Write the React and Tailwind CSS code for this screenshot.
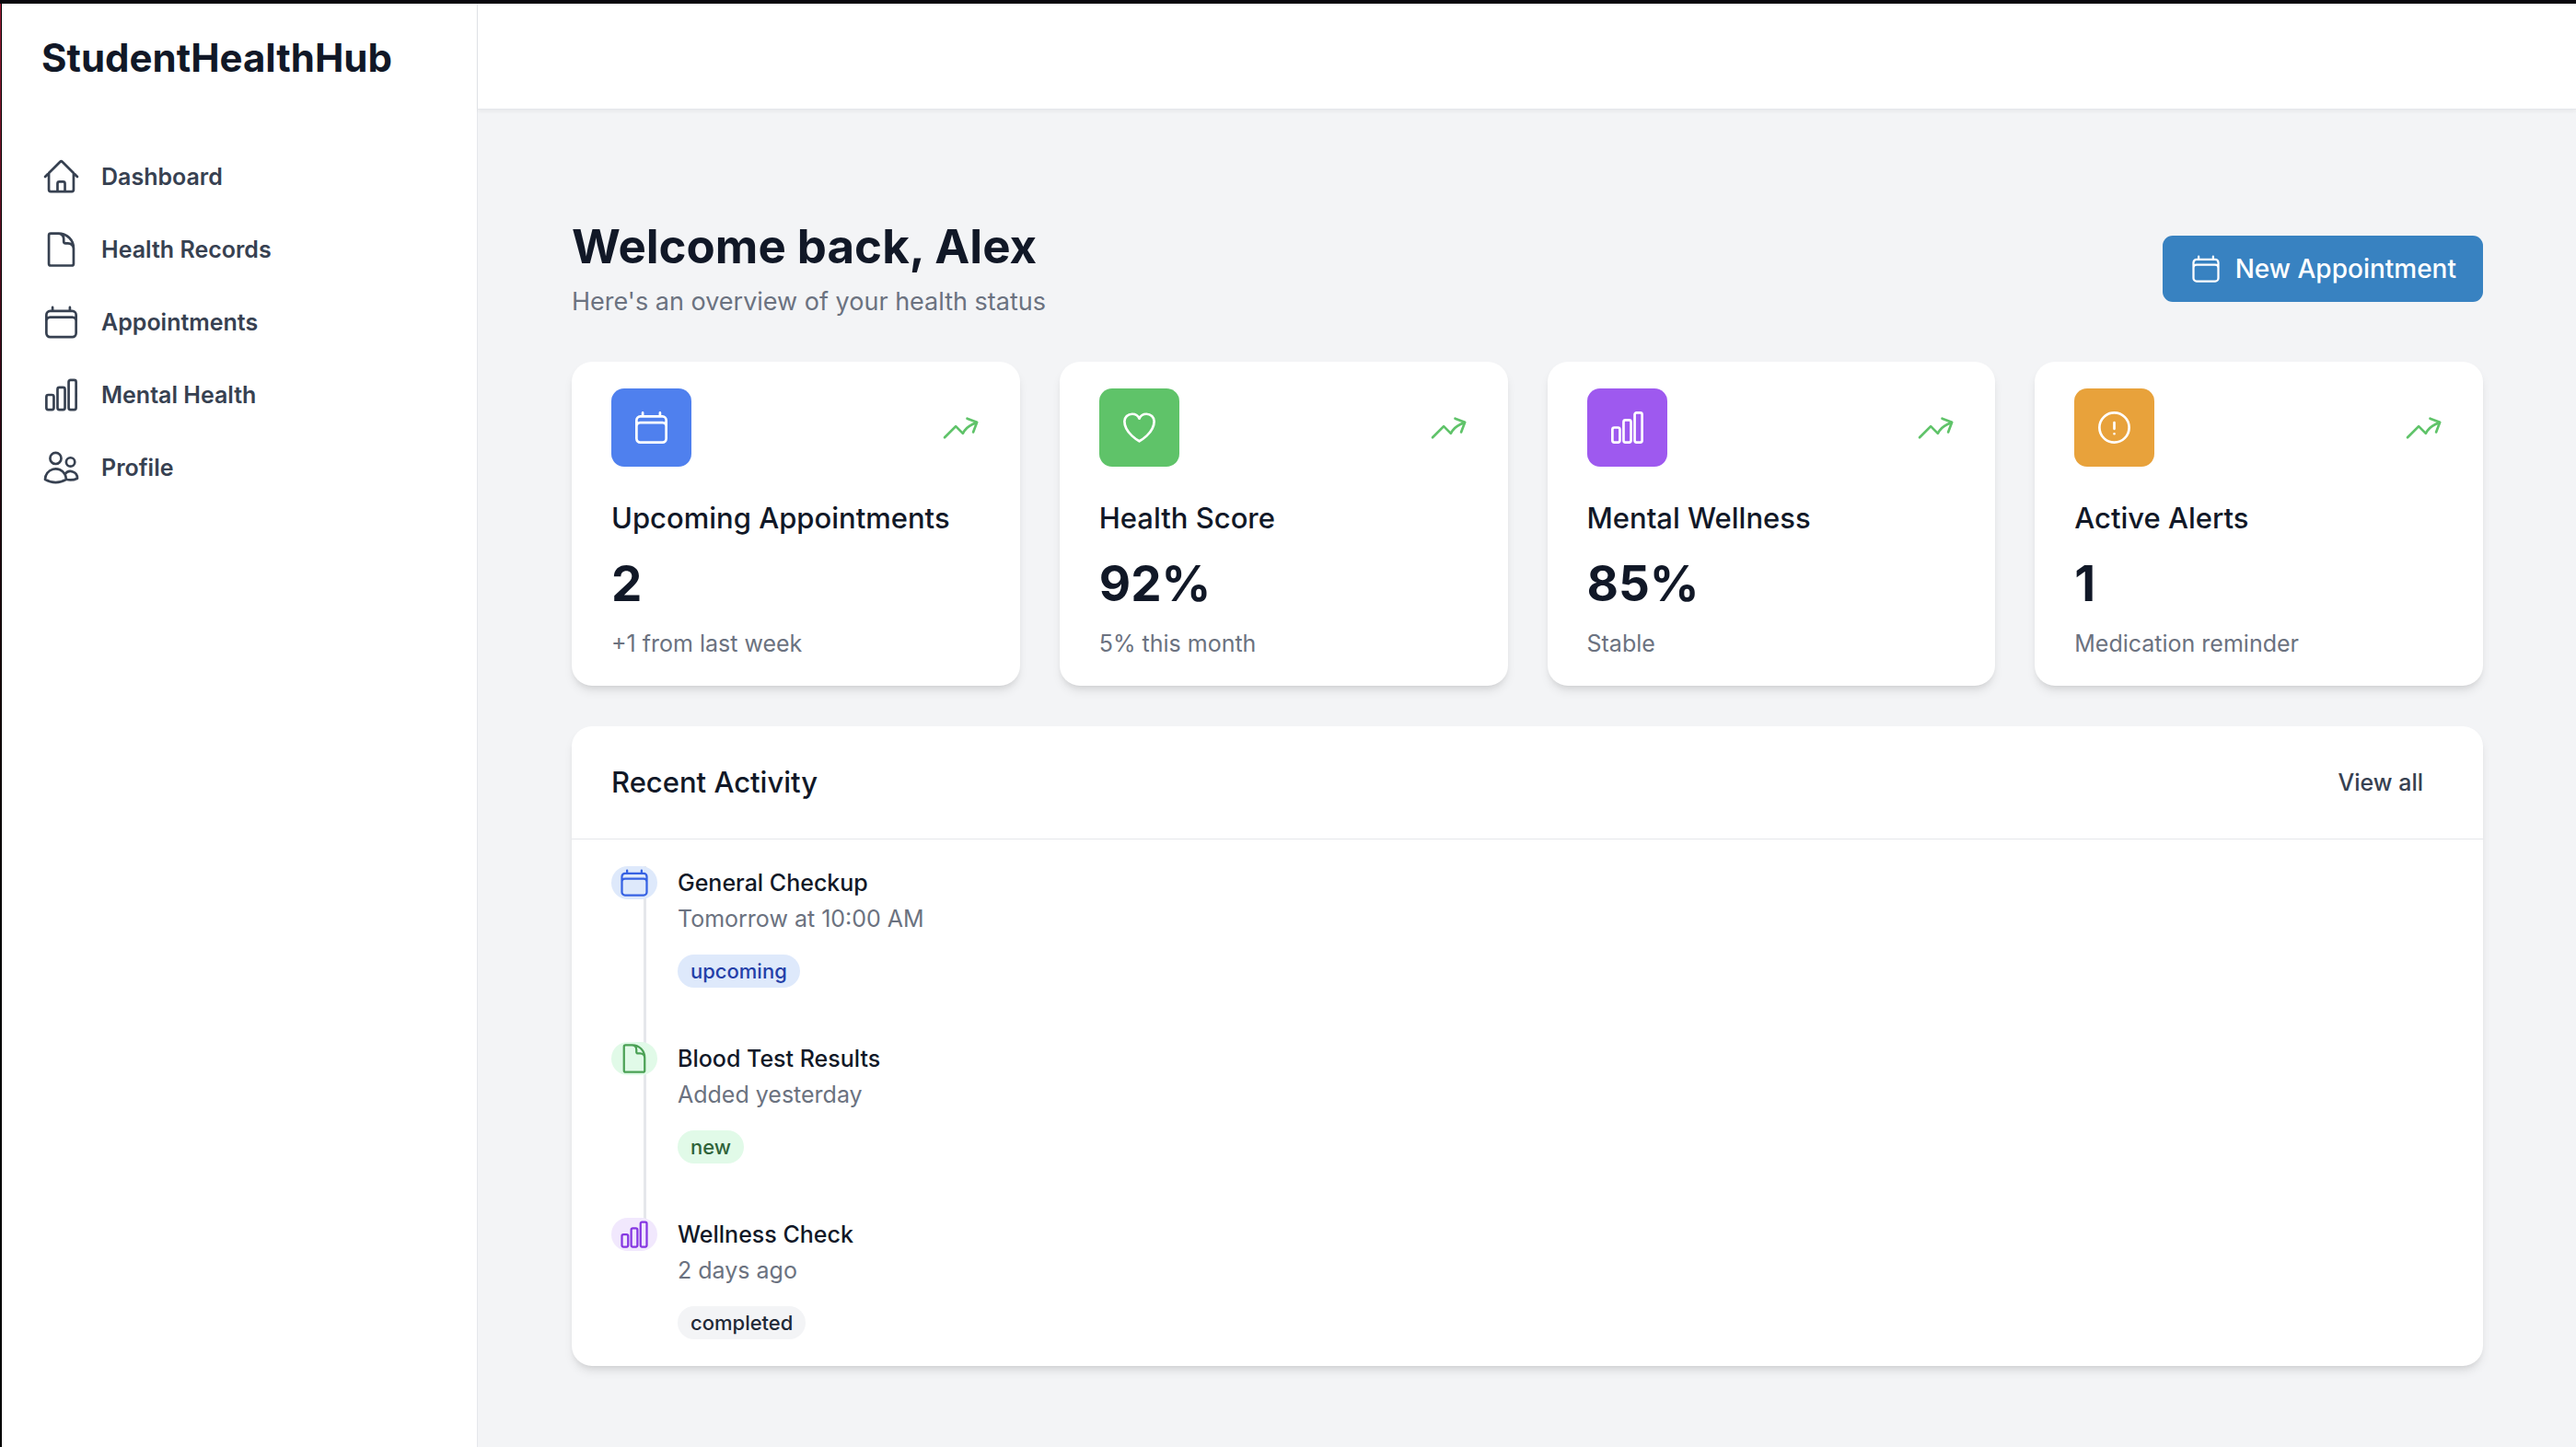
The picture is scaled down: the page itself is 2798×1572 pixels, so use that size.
import {
  HiOutlineHome,
  HiOutlineDocument,
  HiOutlineCalendar,
  HiOutlineChartBar,
  HiOutlineUsers,
  HiOutlineHeart,
  HiOutlineExclamationCircle,
  HiOutlineArrowTrendingUp,
} from "react-icons/hi2";

const NAV = [
  { label: "Dashboard", Icon: HiOutlineHome },
  { label: "Health Records", Icon: HiOutlineDocument },
  { label: "Appointments", Icon: HiOutlineCalendar },
  { label: "Mental Health", Icon: HiOutlineChartBar },
  { label: "Profile", Icon: HiOutlineUsers },
];

const STATS = [
  { title: "Upcoming Appointments", value: "2", note: "+1 from last week", Icon: HiOutlineCalendar, color: "bg-[#4f80ee]" },
  { title: "Health Score", value: "92%", note: "5% this month", Icon: HiOutlineHeart, color: "bg-[#5fc369]" },
  { title: "Mental Wellness", value: "85%", note: "Stable", Icon: HiOutlineChartBar, color: "bg-[#9e59ef]" },
  { title: "Active Alerts", value: "1", note: "Medication reminder", Icon: HiOutlineExclamationCircle, color: "bg-[#e8a23b]" },
];

const ACTIVITY = [
  { title: "General Checkup", time: "Tomorrow at 10:00 AM", status: "upcoming", Icon: HiOutlineCalendar, dot: "bg-[#dee9fb] text-[#3662e3]", badge: "bg-[#dee9fb] text-[#243fa8]" },
  { title: "Blood Test Results", time: "Added yesterday", status: "new", Icon: HiOutlineDocument, dot: "bg-[#e1fae8] text-[#4ba155]", badge: "bg-[#e1fae8] text-[#2f6339]" },
  { title: "Wellness Check", time: "2 days ago", status: "completed", Icon: HiOutlineChartBar, dot: "bg-[#f1e8fd] text-[#8537e2]", badge: "bg-gray-100 text-[#1f2937]" },
];

function Sidebar() {
  return (
    <aside className="w-[517px] shrink-0 border-r border-[#e5e7eb] bg-white px-[43px] pt-6">
      <h1 className="text-[42px] leading-[70px] font-bold text-[#111827]">StudentHealthHub</h1>
      <nav className="mt-[58px] flex flex-col gap-[7px]">
        {NAV.map(({ label, Icon }) => (
          <a key={label} href="#" className="flex items-center gap-[22px] py-[14px] text-[25px] leading-9 font-semibold text-[#374151]">
            <Icon className="h-[44px] w-[43px]" />
            {label}
          </a>
        ))}
      </nav>
    </aside>
  );
}

function StatCard({ title, value, note, Icon, color }) {
  return (
    <article className="rounded-[22px] bg-white px-[43px] pt-[29px] pb-[28px] shadow-[0_7px_11px_-2px_rgba(0,0,0,0.1),0_4px_7px_-4px_rgba(0,0,0,0.1)]">
      <div className="flex items-center justify-between">
        <div className={`rounded-[14px] px-[22px] py-[21px] text-white ${color}`}>
          <Icon className="size-[43px]" />
        </div>
        <HiOutlineArrowTrendingUp className="size-[43px] text-[#5fc369]" />
      </div>
      <h3 className="mt-[31px] text-[31px] leading-[50px] font-medium text-[#111827]">{title}</h3>
      <p className="mt-[14px] text-[53px] leading-[65px] font-bold text-[#111827]">{value}</p>
      <p className="mt-[14px] text-[25px] leading-9 text-[#6b7280]">{note}</p>
    </article>
  );
}

function RecentActivity() {
  return (
    <section className="mt-[44px] rounded-[22px] bg-white shadow-[0_7px_11px_-2px_rgba(0,0,0,0.1),0_4px_7px_-4px_rgba(0,0,0,0.1)]">
      <header className="flex items-center justify-between border-b border-[#e5e7eb] px-[43px] py-9">
        <h2 className="text-[31px] leading-[50px] font-medium text-[#111827]">Recent Activity</h2>
        <button type="button" className="px-[22px] text-[25px] leading-9 font-medium text-[#374151]">View all</button>
      </header>
      <ul className="px-[43px] pt-[29px] pb-[29px]">
        {ACTIVITY.map(({ title, time, status, Icon, dot, badge }) => (
          <li key={title} className="group relative flex items-start gap-[22px] pb-[59px] last:pb-0">
            <span className="absolute top-0 -bottom-1 left-[35px] w-[3px] bg-[#e5e7eb] group-last:hidden" />
            <span className={`relative z-10 rounded-full px-[7px] ${dot}`}>
              <Icon className="size-9" />
            </span>
            <div>
              <h3 className="text-[25px] leading-9 font-medium text-[#111827]">{title}</h3>
              <p className="mt-[3px] text-[25px] leading-9 text-[#6b7280]">{time}</p>
              <span className={`mt-[21px] block w-fit rounded-full px-[14px] text-[22px] leading-9 font-medium ${badge}`}>{status}</span>
            </div>
          </li>
        ))}
      </ul>
    </section>
  );
}

export default function App() {
  return (
    <div className="flex min-h-screen border-t-4 border-[#08070d] bg-gray-100 font-['Inter',sans-serif]">
      <div className="flex w-[2px] shrink-0 bg-black">
        <div className="w-px bg-linear-to-b from-[#a3203c] via-[#2a0614] via-35% to-black" />
      </div>
      <Sidebar />
      <div className="flex min-w-0 flex-1 flex-col">
        <div className="h-[115px] border-b border-[#e5e7eb] bg-white shadow-[0_2px_4px_0_rgba(0,0,0,0.05)]" />
        <main className="pt-[116px] pr-[101px] pb-16 pl-[102px]">
          <div className="flex items-center justify-between">
            <div>
              <h2 className="text-[51px] leading-[65px] font-bold text-[#111827]">Welcome back, Alex</h2>
              <p className="mt-[6px] text-[27px] leading-[43px] text-[#6b7280]">Here's an overview of your health status</p>
            </div>
            <button type="button" className="flex items-center gap-[14px] rounded-[11px] bg-[#3882c1] px-[29px] py-[14px] text-[28px] leading-[44px] font-medium text-white">
              <HiOutlineCalendar className="size-9" />
              New Appointment
            </button>
          </div>
          <div className="mt-[44px] grid grid-cols-4 gap-[43px]">
            {STATS.map((stat) => (
              <StatCard key={stat.title} {...stat} />
            ))}
          </div>
          <RecentActivity />
        </main>
      </div>
    </div>
  );
}
